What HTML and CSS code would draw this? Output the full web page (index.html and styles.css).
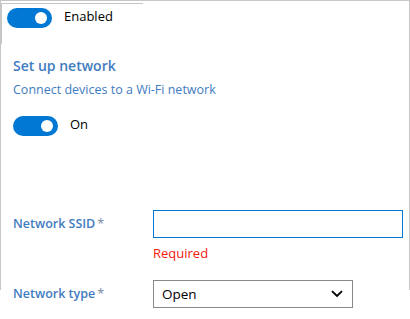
FILE: index.html
```html
<!DOCTYPE html>
<html>
<head>
<meta charset="utf-8">
<link rel="stylesheet" href="styles.css">
</head>
<body>
<div class="frame">
  <div class="tab">
    <div class="toggle-row">
      <span class="toggle"><span class="knob"></span></span>
      <span class="toggle-text">Enabled</span>
    </div>
  </div>
  <div class="section">
    <div class="heading">Set up network</div>
    <div class="desc">Connect devices to a Wi-Fi network</div>
    <div class="toggle-row row2">
      <span class="toggle"><span class="knob"></span></span>
      <span class="toggle-text">On</span>
    </div>
    <div class="field ssid">
      <label class="label">Network SSID<span class="req">*</span></label>
      <div class="control">
        <div class="input"></div>
        <div class="error">Required</div>
      </div>
    </div>
    <div class="field type">
      <label class="label">Network type<span class="req">*</span></label>
      <div class="control">
        <div class="select">
          <span class="select-text">Open</span>
          <svg class="chev" width="12" height="8" viewBox="0 0 12 8"><path d="M1 1.2 L6 6 L11 1.2" fill="none" stroke="#000" stroke-width="1.8"/></svg>
        </div>
      </div>
    </div>
  </div>
</div>
</body>
</html>
```
FILE: styles.css
```css
html, body {
  margin: 0;
  padding: 0;
  background: #fff;
}
body {
  font-family: "Open Sans", "Noto Sans", sans-serif;
  font-size: 12.5px;
  color: #000;
  width: 410px;
  height: 319px;
  overflow: hidden;
}
.frame {
  box-sizing: border-box;
  width: 410px;
  height: 290px;
  border: 1px solid #c6c6c6;
  border-bottom: none;
}
.tab {
  box-sizing: border-box;
  width: 142px;
  height: 41px;
  margin-top: 2px;
  border-top: 1px solid #c6c6c6;
  border-left: 1px solid #c6c6c6;
  padding: 4px 0 0 5px;
}
.toggle-row {
  display: flex;
  align-items: center;
  gap: 12px;
  height: 20px;
}
.toggle {
  box-sizing: border-box;
  width: 45px;
  height: 20px;
  border-radius: 10px;
  background: #0078d4;
  display: flex;
  align-items: center;
  justify-content: flex-end;
  padding-right: 5px;
  flex: none;
}
.knob {
  width: 12px;
  height: 12px;
  border-radius: 50%;
  background: #fff;
}
.toggle-text {
  line-height: 20px;
  margin-top: -4px;
  font-size: 13px;
}
.section {
  padding-left: 12px;
  margin-top: 12px;
}
.heading {
  font-size: 14px;
  font-weight: 600;
  color: #3f7cc0;
  line-height: 20px;
}
.desc {
  margin-top: 5px;
  color: #3f7cc0;
  line-height: 18px;
}
.row2 {
  margin-top: 17px;
}
.field {
  display: flex;
  align-items: flex-start;
}
.ssid {
  margin-top: 74px;
}
.type {
  margin-top: 18px;
}
.label {
  width: 140px;
  flex: none;
  font-weight: 600;
  color: #3f7cc0;
  line-height: 28px;
}
.req {
  color: #7a8aa0;
  font-weight: 400;
  margin-left: 2px;
}
.input {
  box-sizing: border-box;
  width: 250px;
  height: 28px;
  border: 1px solid #0078d4;
}
.error {
  color: #f0200c;
  line-height: 18px;
  margin-top: 6px;
  font-size: 13px;
}
.select {
  box-sizing: border-box;
  width: 200px;
  height: 28px;
  border: 1px solid #8a8886;
  display: flex;
  align-items: center;
  justify-content: space-between;
  padding: 0 9px 0 8px;
  font-size: 13.5px;
}
.chev {
  display: block;
}
```
